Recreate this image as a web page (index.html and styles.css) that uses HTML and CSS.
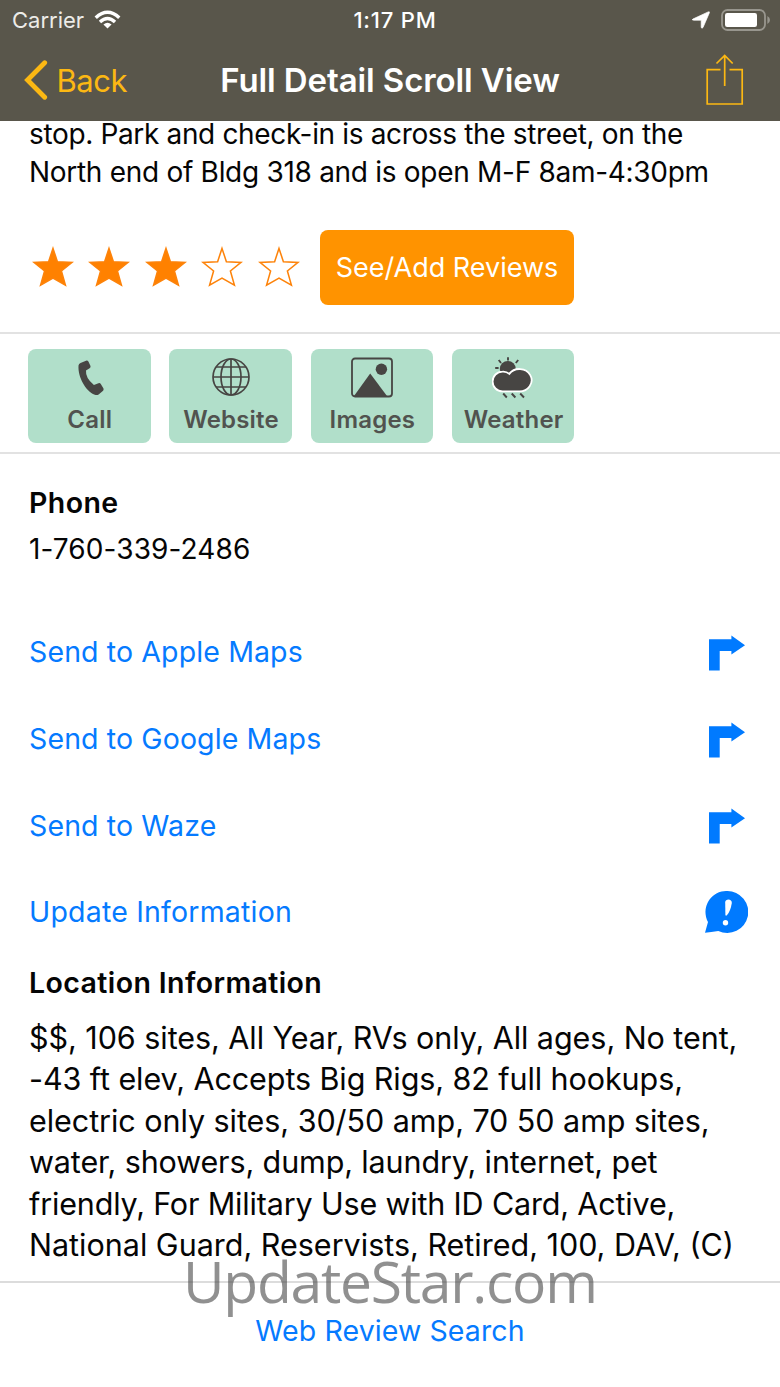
FILE: index.html
```html
<!DOCTYPE html>
<html lang="en">
<head>
<meta charset="utf-8">
<title>Full Detail Scroll View</title>
<link rel="stylesheet" href="styles.css">
</head>
<body>
<svg class="defs" width="0" height="0">
  <symbol id="star" viewBox="0 0 44 44"><path d="M22 2.5 26.6 16.4 42 17.2 30.8 26.2 35 41 22 33.6 9 41 13.2 26.2 2 17.2 17.4 16.4Z"/></symbol>
  <symbol id="turn" viewBox="0 0 38 36"><path d="M0 4H23V0L37 10 23 19.5V16H11V36H0Z"/></symbol>
</svg>
<header class="header">
  <div class="status">
    <div class="carrier"><span class="carrier-name">Carrier</span>
      <svg width="27" height="20" viewBox="0 0 28 20"><g fill="none" stroke="#fff" stroke-width="3.6"><path d="M1.8 7.6Q14-3.6 26.2 7.6"/><path d="M6.2 12Q14 5 21.8 12"/></g><path fill="#fff" d="M9.8 14.6Q14 11.2 18.2 14.6L14 18.9Z"/></svg>
    </div>
    <span class="time">1:17 PM</span>
    <div class="indicators">
      <svg width="18" height="18" viewBox="0 0 18 18"><path d="M.8 8.1 16.2.9Q17.9.2 17.3 1.9L11 16.5Q9.6 18 9.2 16.2V9.2H2Q-.8 9 .8 8.1Z" fill="#fff" stroke="#fff" stroke-width=".7"/></svg>
      <svg width="50" height="22" viewBox="0 0 50 22"><rect x="1" y="1" width="43" height="20" rx="5.5" fill="none" stroke="#98968e" stroke-width="1.8"/><rect x="4" y="4" width="32" height="14" rx="2.2" fill="#fff"/><path d="M46.4 7Q49 8.4 49 11T46.4 15Z" fill="#98968e"/></svg>
    </div>
  </div>
  <nav class="nav">
    <a class="back"><svg width="24" height="40" viewBox="0 0 24 40"><path d="M20.7 2.7 3.5 20 20.7 37.3" fill="none" stroke="#fcb813" stroke-width="4.8" stroke-linecap="round" stroke-linejoin="miter"/></svg><span class="back-label">Back</span></a>
    <h1 class="title">Full Detail Scroll View</h1>
    <svg class="share" width="38" height="52" viewBox="0 0 38 52"><path d="M14.5 15.7H1.2V50H36.2V15.7H23.5M18.7 32V2M10.5 9.5 18.7 1.4 26.7 9.5" fill="none" stroke="#fcb813" stroke-width="1.7"/></svg>
  </nav>
</header>
<main class="content">
  <p class="summary"><span class="s1">stop. Park and check-in is across the street, on the</span><br><span class="s2">North end of Bldg 318 and is open M-F 8am-4:30pm</span></p>
  <section class="reviews">
    <div class="stars">
      <svg class="star on"><use href="#star"/></svg><svg class="star on"><use href="#star"/></svg><svg class="star on"><use href="#star"/></svg><svg class="star"><use href="#star"/></svg><svg class="star"><use href="#star"/></svg>
    </div>
    <a class="review-button"><span>See/Add Reviews</span></a>
  </section>
  <section class="actions">
    <a class="action"><svg viewBox="0 0 44 44"><path d="M12.5 7 18 4.7Q19.6 4.2 20.4 5.5L22.5 10Q22.9 11.4 21.6 12.2L18 14.5Q17.3 22 25.9 29L30.5 27.2Q32 26.8 32.8 28L35.5 32.4Q36 33.9 34.8 34.9L30.6 38.4Q29 39.6 26.8 38.8C17.5 35 9.8 21 10.5 9.5Q10.7 7.8 12.5 7Z"/></svg><span>Call</span></a>
    <a class="action"><svg viewBox="0 0 44 44"><g fill="none" stroke="#474543" stroke-width="1.7"><circle cx="22" cy="21" r="18"/><ellipse cx="22" cy="21" rx="10" ry="18"/><path d="M22 3V39M4 21H40M7 11H37M7 31H37"/></g></svg><span>Website</span></a>
    <a class="action"><svg viewBox="0 0 44 44"><rect x="2" y="2.5" width="40" height="38" rx="3" fill="none" stroke="#474543" stroke-width="1.8"/><circle cx="31.4" cy="13.3" r="5.7"/><path d="M4 40 20.2 17.5 37 40Z"/></svg><span>Images</span></a>
    <a class="action"><svg viewBox="0 0 44 44"><circle cx="15.8" cy="13" r="8"/><path d="M16 1.2V4.4M6.7 4 9 7M26.2 4 23.8 7M3.2 12H6.6M11.2 37.5 14.8 41.5M19.7 37.5 23.4 41.5M28.2 37.5 32 41.5" stroke="#474543" stroke-width="1.9"/><path d="M10.5 35.4A9.9 9.9 0 0 1 10.5 15.6Q14.4 15.3 17.3 17.9A12.2 11.2 0 1 1 27 35.4Z" stroke="#fff" stroke-width="1.8"/></svg><span>Weather</span></a>
  </section>
  <section class="phone"><h2 class="heading">Phone</h2><p class="number">1-760-339-2486</p></section>
  <section class="links">
    <a class="link"><span class="l1">Send to Apple Maps</span><svg class="turn"><use href="#turn"/></svg></a>
    <a class="link"><span class="l2">Send to Google Maps</span><svg class="turn"><use href="#turn"/></svg></a>
    <a class="link"><span class="l3">Send to Waze</span><svg class="turn"><use href="#turn"/></svg></a>
    <a class="link"><span class="l4">Update Information</span><svg class="notice" viewBox="0 0 43 42"><path d="M22 0A21 21 0 1 1 13.3 40Q6 41.2 0 41.7L3 31A21 21 0 0 1 22 0Z"/><path d="M20.2 11C20.4 7.4 27.3 7.5 26.8 12Q25.7 19.6 22.1 24.1Q20.8 25.4 20.4 24Z" fill="#fff"/><circle cx="20.5" cy="31.8" r="2.7" fill="#fff"/></svg></a>
  </section>
  <section class="location">
    <h2 class="heading">Location Information</h2>
    <p class="details"><span class="d1">$$, 106 sites, All Year, RVs only, All ages, No tent,</span><br><span class="d2">-43 ft elev, Accepts Big Rigs, 82 full hookups,</span><br><span class="d3">electric only sites, 30/50 amp, 70 50 amp sites,</span><br><span class="d4">water, showers, dump, laundry, internet, pet</span><br><span class="d5">friendly, For Military Use with ID Card, Active,</span><br><span class="d6">National Guard, Reservists, Retired, 100, DAV, (C)</span></p>
  </section>
  <footer class="search"><a>Web Review Search</a></footer>
</main>
<div class="watermark">UpdateStar.com</div>
</body>
</html>
```
FILE: styles.css
```css
* { box-sizing: border-box; }
body { margin: 0; width: 780px; height: 1387px; overflow: hidden; position: relative; display: flex; flex-direction: column; background: #fff; color: #050505; font-family: Inter, "Liberation Sans", sans-serif; }
h1, h2, p { margin: 0; }
svg { display: block; flex: none; }
.defs { position: absolute; }
.header { flex: none; height: 121px; background: #59564b; color: #fff; }
.status { height: 40px; display: grid; grid-template-columns: 1fr auto 1fr; align-items: center; padding: 0 9px 0 12px; font-size: 22px; }
.carrier { display: flex; align-items: center; gap: 9.5px; }
.carrier-name { color: #edece8; }
.time { font-weight: 500; padding-left: 7px; letter-spacing: .8px; }
.indicators { display: flex; justify-content: flex-end; align-items: center; gap: 11px; }
.nav { height: 80px; display: grid; grid-template-columns: 1fr auto 1fr; align-items: center; padding: 0 36px 0 24px; }
.back { display: flex; align-items: center; gap: 8.5px; color: #fcb813; font-size: 31px; }
.back-label { letter-spacing: -.5px; }
.title { font-size: 33px; line-height: 38px; font-weight: 600; letter-spacing: -.1px; padding-left: 12px; margin-top: -1px; }
.share { justify-self: end; }
.content { flex: 1; overflow: hidden; }
.summary { margin: -6px 0 0 29px; font-size: 28px; line-height: 38px; white-space: nowrap; }
.s1 { letter-spacing: -.35px; }
.s2 { letter-spacing: -.29px; }
.reviews { height: 143px; display: flex; align-items: center; border-bottom: 2px solid #e2e2e2; padding: 11px 0 0 32px; }
.stars { display: flex; gap: 14.4px; width: 288px; }
.star { width: 42px; height: 42px; fill: none; stroke: #fd830a; stroke-width: 1.6; }
.on { fill: #ff8100; }
.review-button { width: 254px; height: 75px; border-radius: 8px; background: #ff9300; color: #fff; display: flex; align-items: center; justify-content: center; font-size: 27px; padding-top: 1px; }
.actions { height: 120px; display: flex; gap: 18.8px; padding: 15px 0 0 28px; border-bottom: 2px solid #e2e2e2; }
.action { width: 122.5px; height: 94px; border-radius: 8px; background: #b1dfca; color: #51534f; fill: #474543; display: flex; flex-direction: column; align-items: center; padding: 7px 0 0 1px; font-size: 24px; line-height: 28px; font-weight: 600; letter-spacing: .2px; }
.action svg { width: 44px; height: 44px; margin-bottom: 6px; }
.phone { padding: 30px 29px 0; height: 155px; }
.heading { font-size: 28.5px; line-height: 38px; font-weight: 600; letter-spacing: .4px; }
.number { font-size: 28px; line-height: 38px; padding-top: 8px; letter-spacing: .1px; }
.links { color: #057aff; fill: #007aff; padding: 0 32px 0 29px; font-size: 28.5px; letter-spacing: .12px; }
.l4 { letter-spacing: .2px; }
.link { height: 86.7px; display: flex; align-items: center; justify-content: space-between; }
.link span { padding-bottom: 1px; }
.turn { width: 37px; height: 36px; margin: 1px 2px 0 0; }
.notice { width: 43px; height: 42px; }
.location { height: 325px; padding: 8px 29px 0; }
.details { font-size: 30.5px; line-height: 41.5px; padding-top: 15px; white-space: nowrap; }
.d1 { letter-spacing: -.05px; }
.d2 { letter-spacing: -.08px; }
.d3 { letter-spacing: -.05px; }
.d4 { letter-spacing: -.12px; }
.d5 { letter-spacing: -.16px; }
.search { border-top: 2px solid #dcdcdc; height: 106px; padding-top: 29px; text-align: center; color: #057aff; font-size: 28.5px; line-height: 38px; letter-spacing: .1px; }
.watermark { position: absolute; left: 183px; top: 1243px; font-family: "Open Sans", "Noto Sans", sans-serif; font-size: 57px; line-height: 76px; letter-spacing: -1.25px; color: rgba(70, 70, 70, .6); white-space: nowrap; }
```
